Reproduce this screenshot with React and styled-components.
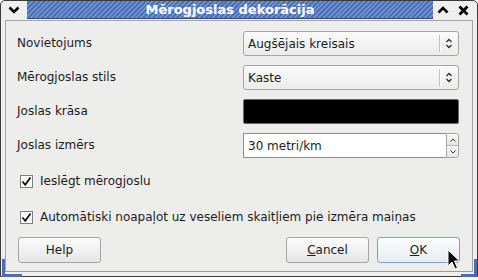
import React from 'react';
import styled, { createGlobalStyle } from 'styled-components';

const Global = createGlobalStyle`
  html, body {
    margin: 0;
    padding: 0;
    background: #ffffff;
  }
  body {
    font-family: "DejaVu Sans", "Liberation Sans", sans-serif;
    font-size: 12px;
    color: #1c1c1c;
  }
`;

const Window = styled.div`
  position: relative;
  width: 478px;
  height: 277px;
  box-sizing: border-box;
  border: 1px solid #3c3c3c;
  border-radius: 5px 5px 0 0;
  background: #efefef;
  display: flex;
  flex-direction: column;
`;

const TitleBar = styled.div`
  height: 18px;
  display: flex;
  align-items: stretch;
  padding: 0 4px 0 0;
`;

const FrameButton = styled.div`
  width: ${p => p.$w || 20}px;
  display: flex;
  align-items: center;
  justify-content: center;
`;

const TitleStripe = styled.div`
  flex: 1;
  display: flex;
  align-items: center;
  justify-content: center;
  color: #ffffff;
  font-weight: bold;
  font-size: 13px;
  border-bottom: 1px solid #2c4c8c;
  background: repeating-linear-gradient(
    -45deg,
    #4d70b8 0px,
    #4d70b8 2px,
    #7594d3 2px,
    #7594d3 3.4px
  );
`;

const Client = styled.div`
  flex: 1;
  margin: 1px 4px 4px 4px;
  border: 1px solid #a3a3a3;
  border-bottom-color: #9a9a9a;
  background: #ededec;
  padding: 10px 12px 7px 11px;
  display: flex;
  flex-direction: column;
`;

const Form = styled.div`
  display: grid;
  grid-template-columns: 226px 216px;
  grid-auto-rows: 25px;
  row-gap: 9px;
  align-items: center;
`;

const Label = styled.div`
  line-height: 25px;
`;

const Combo = styled.div`
  height: 25px;
  box-sizing: border-box;
  border: 1px solid #a6a6a6;
  border-radius: 3px;
  background: linear-gradient(#fbfbfb, #ececec);
  display: flex;
  align-items: center;
  padding-left: 4px;
`;

const ComboText = styled.div`
  flex: 1;
`;

const ComboSep = styled.div`
  width: 1px;
  height: 17px;
  background: #c2c2c2;
  box-shadow: 1px 0 0 #ffffff;
`;

const ComboArrow = styled.div`
  width: 18px;
  display: flex;
  justify-content: center;
`;

const Swatch = styled.div`
  height: 25px;
  box-sizing: border-box;
  border: 1px solid #6a6a6a;
  border-radius: 2px;
  background: #000000;
`;

const Spin = styled.div`
  height: 25px;
  box-sizing: border-box;
  display: flex;
`;

const SpinEntry = styled.div`
  flex: 1;
  border: 1px solid #8e8e8e;
  border-right: none;
  background: #ffffff;
  display: flex;
  align-items: center;
  padding-left: 4px;
`;

const SpinButtons = styled.div`
  width: 11px;
  display: flex;
  flex-direction: column;
  border: 1px solid #a6a6a6;
  border-radius: 0 3px 3px 0;
  overflow: hidden;
`;

const SpinHalf = styled.div`
  flex: 1;
  display: flex;
  align-items: center;
  justify-content: center;
  background: linear-gradient(#fafafa, #e6e6e6);
  & + & {
    border-top: 1px solid #b4b4b4;
  }
`;

const CheckRow = styled.div`
  height: 24px;
  display: flex;
  align-items: center;
  gap: 7px;
  padding-left: 3px;
  margin-top: ${p => p.$mt}px;
`;

const Box = styled.div`
  width: 13px;
  height: 13px;
  box-sizing: border-box;
  border: 1px solid #7f7f7f;
  background: #ffffff;
  display: flex;
  align-items: center;
  justify-content: center;
`;

const ButtonRow = styled.div`
  margin-top: 8px;
  display: flex;
  align-items: center;
  padding-left: 1px;
`;

const Button = styled.div`
  width: 83px;
  height: 26px;
  box-sizing: border-box;
  border: 1px solid ${p => (p.$focus ? '#7f9dcf' : '#a5a5a5')};
  border-radius: 3px;
  background: ${p => (p.$focus ? 'linear-gradient(#fcfdff, #e8ecf3)' : 'linear-gradient(#fbfbfb, #e6e6e6)')};
  display: flex;
  align-items: center;
  justify-content: center;
  margin-left: ${p => p.$ml || 0}px;
`;

const Spacer = styled.div`
  flex: 1;
`;

const Mnemonic = styled.span`
  text-decoration: underline;
`;

const Corner = styled.div`
  position: absolute;
  bottom: -1px;
  ${p => (p.$side === 'left' ? 'left: 1px;' : 'right: 0px;')}
  width: ${p => (p.$side === 'left' ? 20 : 16)}px;
  height: 18px;
  box-sizing: border-box;
  border-bottom: 3px solid #4a6cb4;
  ${p => (p.$side === 'left' ? 'border-left: 3px solid #4a6cb4;' : 'border-right: 3px solid #4a6cb4;')}
`;

const Cursor = styled.svg`
  position: absolute;
  left: 446px;
  top: 248px;
`;

const UpDown = () => (
  <svg width="8" height="11" viewBox="0 0 8 11">
    <path d="M1.5 4 L4 1.5 L6.5 4 M1.5 7 L4 9.5 L6.5 7" fill="none" stroke="#2a2a2a" strokeWidth="1.3" />
  </svg>
);

const Chevron = ({ up }) => (
  <svg width="6" height="4" viewBox="0 0 6 4">
    <path d={up ? 'M0.5 3.5 L3 1 L5.5 3.5' : 'M0.5 0.5 L3 3 L5.5 0.5'} fill="none" stroke="#333" strokeWidth="1" />
  </svg>
);

const Check = () => (
  <svg width="11" height="11" viewBox="0 0 11 11">
    <path d="M1.5 5.5 L4.2 8.8 L9.5 1.5" fill="none" stroke="#111" strokeWidth="1.8" />
  </svg>
);

const App = () => {
  return (
    <>
      <Global />
      <Window>
        <TitleBar>
          <FrameButton $w={26}>
            <svg width="12" height="8" viewBox="0 0 12 8">
              <path d="M1.5 1.5 L6 6 L10.5 1.5" fill="none" stroke="#000" strokeWidth="2.6" />
            </svg>
          </FrameButton>
          <TitleStripe>Mērogjoslas dekorācija</TitleStripe>
          <FrameButton>
            <svg width="12" height="8" viewBox="0 0 12 8">
              <path d="M1.5 6.5 L6 2 L10.5 6.5" fill="none" stroke="#000" strokeWidth="2.6" />
            </svg>
          </FrameButton>
          <FrameButton>
            <svg width="11" height="11" viewBox="0 0 11 11">
              <path d="M1.5 1.5 L9.5 9.5 M9.5 1.5 L1.5 9.5" fill="none" stroke="#000" strokeWidth="2.8" />
            </svg>
          </FrameButton>
        </TitleBar>
        <Client>
          <Form>
            <Label>Novietojums</Label>
            <Combo>
              <ComboText>Augšējais kreisais</ComboText>
              <ComboSep />
              <ComboArrow><UpDown /></ComboArrow>
            </Combo>
            <Label>Mērogjoslas stils</Label>
            <Combo>
              <ComboText>Kaste</ComboText>
              <ComboSep />
              <ComboArrow><UpDown /></ComboArrow>
            </Combo>
            <Label>Joslas krāsa</Label>
            <Swatch />
            <Label>Joslas izmērs</Label>
            <Spin>
              <SpinEntry>30 metri/km</SpinEntry>
              <SpinButtons>
                <SpinHalf><Chevron up /></SpinHalf>
                <SpinHalf><Chevron /></SpinHalf>
              </SpinButtons>
            </Spin>
          </Form>
          <CheckRow $mt={11}>
            <Box><Check /></Box>
            Ieslēgt mērogjoslu
          </CheckRow>
          <CheckRow $mt={12}>
            <Box><Check /></Box>
            Automātiski noapaļot uz veseliem skaitļiem pie izmēra maiņas
          </CheckRow>
          <ButtonRow>
            <Button>Help</Button>
            <Spacer />
            <Button><span><Mnemonic>C</Mnemonic>ancel</span></Button>
            <Button $ml={8} $focus><span><Mnemonic>O</Mnemonic>K</span></Button>
          </ButtonRow>
        </Client>
        <Corner $side="left" />
        <Corner $side="right" />
        <Cursor width="13" height="22" viewBox="0 0 13 22">
          <path d="M1 1 L1 17 L5 13 L8 20 L10.5 19 L7.5 12 L12.5 12 Z" fill="#000" stroke="#fff" strokeWidth="1" />
        </Cursor>
      </Window>
    </>
  );
};

export default App;
